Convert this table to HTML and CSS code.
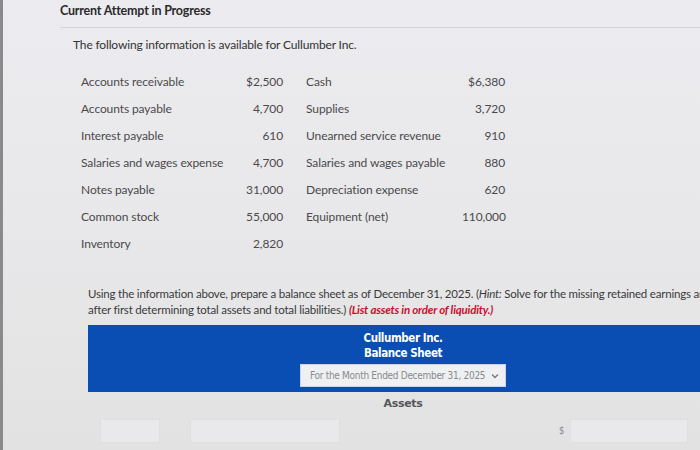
FILE: index.html
```html
<!DOCTYPE html>
<html>
<head>
    <title>Current Attempt in Progress</title>
    <meta name="viewport" content="width=device-width, initial-scale=1.0">
    <link rel="stylesheet" href="styles.css">
</head>
<body>
    <div class="screen">
        <div class="page">
            <h1 class="attempt">Current Attempt in Progress</h1>
            <div class="question">
                <p class="intro">The following information is available for Cullumber Inc.</p>

                <div class="data-table">
                    <div class="label">Accounts receivable</div><div class="amount">$2,500</div>
                    <div class="label second">Cash</div><div class="amount">$6,380</div>

                    <div class="label">Accounts payable</div><div class="amount">4,700</div>
                    <div class="label second">Supplies</div><div class="amount">3,720</div>

                    <div class="label">Interest payable</div><div class="amount">610</div>
                    <div class="label second">Unearned service revenue</div><div class="amount">910</div>

                    <div class="label">Salaries and wages expense</div><div class="amount">4,700</div>
                    <div class="label second">Salaries and wages payable</div><div class="amount">880</div>

                    <div class="label">Notes payable</div><div class="amount">31,000</div>
                    <div class="label second">Depreciation expense</div><div class="amount">620</div>

                    <div class="label">Common stock</div><div class="amount">55,000</div>
                    <div class="label second">Equipment (net)</div><div class="amount">110,000</div>

                    <div class="label">Inventory</div><div class="amount">2,820</div>
                    <div class="label second"></div><div class="amount"></div>
                </div>

                <p class="task">
                    <span class="line">Using the information above, prepare a balance sheet as of December 31, 2025. (<em>Hint:</em> Solve for the missing retained earnings amount</span>
                    <span class="line">after first determining total assets and total liabilities.) <strong class="note">(List assets in order of liquidity.)</strong></span>
                </p>

                <div class="sheet">
                    <div class="sheet-head">
                        <div class="company">Cullumber Inc.</div>
                        <div class="company">Balance Sheet</div>
                        <div class="period">
                            <span>For the Month Ended December 31, 2025</span>
                            <svg width="8" height="6" viewBox="0 0 8 6"><path d="M1 1.5 L4 4.5 L7 1.5" fill="none" stroke="#777" stroke-width="1.3"/></svg>
                        </div>
                    </div>
                    <div class="section">Assets</div>
                    <div class="entry">
                        <div class="field account"></div>
                        <div class="field account-right"></div>
                        <span class="dollar">$</span>
                        <div class="field value"></div>
                    </div>
                </div>
            </div>
        </div>
    </div>
</body>
</html>
```

FILE: styles.css
```css
:root {
    --bg: #e7e7ea;
    --text: #4a4a4c;
    --heading: #2a2a2c;
    --blue: #0a4db3;
    --red: #c8102e;
}

body {
    margin: 0;
    width: 700px;
    height: 450px;
    overflow: hidden;
    font-family: 'Lato', 'Open Sans', sans-serif;
    color: var(--text);
}

.screen {
    height: 450px;
    background: linear-gradient(180deg, #ecebef 0%, #e8e8ea 50%, #e2e2e2 100%);
    border-left: 3px solid #8a8a8c;
}

.page {
    padding-left: 57px;
}

.attempt {
    margin: 0;
    height: 27px;
    line-height: 22px;
    font-size: 12.5px;
    letter-spacing: -0.2px;
    font-weight: 700;
    color: var(--heading);
    border-bottom: 1px solid #d6d6d6;
}

.question {
    padding-left: 13px;
}

.intro {
    margin: 0;
    padding-top: 8px;
    line-height: 18px;
    font-size: 12px;
    letter-spacing: -0.15px;
    color: #333;
}

.data-table {
    display: grid;
    grid-template-columns: 140px 62px 179px 43px;
    margin: 14px 0 0 8px;
}

.data-table .label,
.data-table .amount {
    height: 27px;
    line-height: 27px;
    font-size: 12px;
    letter-spacing: -0.1px;
    white-space: nowrap;
}

.data-table .amount {
    text-align: right;
}

.data-table .second {
    padding-left: 23px;
}

.task {
    margin: 29px 0 0 15px;
    font-size: 11.5px;
    letter-spacing: -0.2px;
    line-height: 16px;
    color: #3a3a3c;
}

.task .line {
    display: block;
    white-space: nowrap;
}

.note {
    color: var(--red);
    font-style: italic;
}

.sheet {
    margin: 7px 0 0 15px;
    width: 630px;
}

.sheet-head {
    background: var(--blue);
    height: 67px;
    display: flex;
    flex-direction: column;
    align-items: center;
    padding: 6px 0 0 0;
    box-sizing: border-box;
}

.company {
    font-family: 'DejaVu Sans', sans-serif;
    font-stretch: condensed;
    font-weight: 700;
    font-size: 11.5px;
    line-height: 15px;
    color: #fff;
    letter-spacing: -0.4px;
}

.period {
    margin-top: 3px;
    width: 206px;
    height: 23px;
    box-sizing: border-box;
    background: #eef0f2;
    border: 1px solid #c9d3e6;
    display: flex;
    align-items: center;
    justify-content: space-between;
    padding: 0 6px 0 9px;
    font-family: 'DejaVu Sans', sans-serif;
    font-stretch: condensed;
    font-size: 10px;
    color: #8a8a8c;
    letter-spacing: -0.3px;
}

.section {
    text-align: center;
    padding-top: 5px;
    font-family: 'DejaVu Sans', sans-serif;
    font-weight: 700;
    font-size: 11px;
    letter-spacing: -0.3px;
    line-height: 14px;
    color: #55565a;
}

.entry {
    display: flex;
    align-items: center;
    margin-top: 7px;
    height: 25px;
}

.field {
    height: 24px;
    border: 1px solid #dfdfe1;
    background: #e9e9eb;
    box-sizing: border-box;
}

.account {
    width: 60px;
    margin-left: 12px;
}

.account-right {
    width: 150px;
    margin-left: 30px;
}

.dollar {
    margin-left: 219px;
    font-size: 9px;
    color: #8a8a8c;
}

.value {
    width: 118px;
    margin-left: 6px;
}
```
